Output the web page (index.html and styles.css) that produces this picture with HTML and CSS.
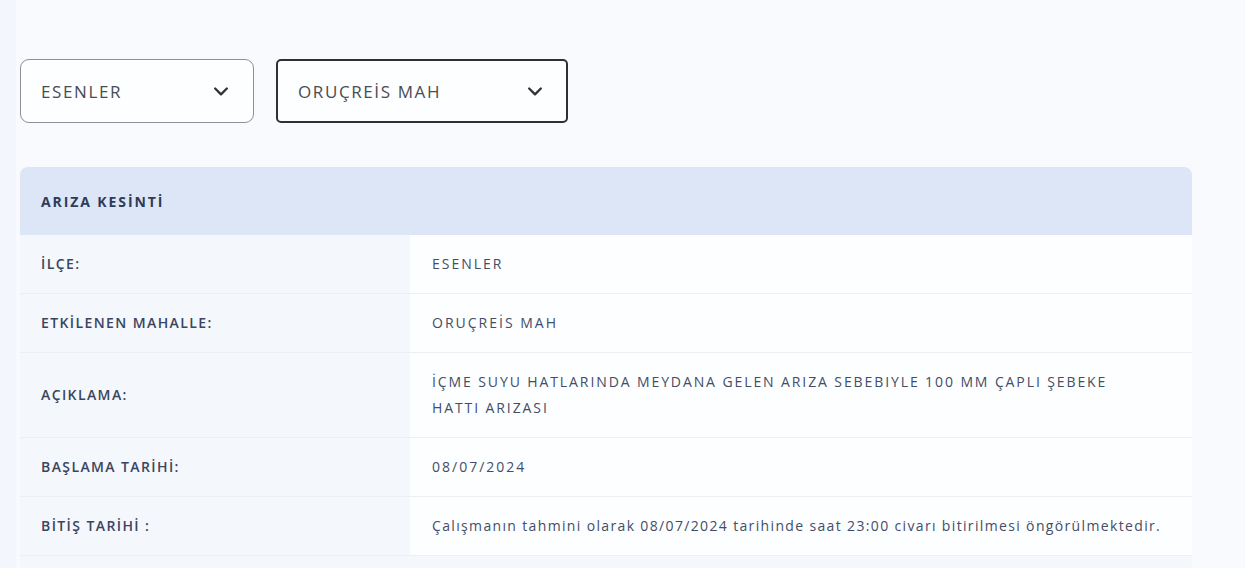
FILE: index.html
```html
<!DOCTYPE html>
<html>
<head>
    <title>Arıza Kesinti</title>
    <meta charset="utf-8">
    <link rel="stylesheet" href="styles.css">
</head>
<body>
    <div class="page">
        <div class="filters">
            <div class="select">
                <span>ESENLER</span>
                <svg class="chevron" width="20" height="20" viewBox="0 0 24 24"><path d="M5 9l7 7 7-7" fill="none" stroke="#333" stroke-width="2.8" stroke-linecap="round" stroke-linejoin="round"/></svg>
            </div>
            <div class="select select-active">
                <span>ORUÇREİS MAH</span>
                <svg class="chevron" width="20" height="20" viewBox="0 0 24 24"><path d="M5 9l7 7 7-7" fill="none" stroke="#333" stroke-width="2.8" stroke-linecap="round" stroke-linejoin="round"/></svg>
            </div>
        </div>

        <div class="outage">
            <div class="outage-head">ARIZA KESİNTİ</div>
            <div class="row">
                <div class="label">İLÇE:</div>
                <div class="value">ESENLER</div>
            </div>
            <div class="row">
                <div class="label">ETKİLENEN MAHALLE:</div>
                <div class="value">ORUÇREİS MAH</div>
            </div>
            <div class="row">
                <div class="label">AÇIKLAMA:</div>
                <div class="value value-long">İÇME SUYU HATLARINDA MEYDANA GELEN ARIZA SEBEBIYLE 100 MM ÇAPLI ŞEBEKE<br>HATTI ARIZASI</div>
            </div>
            <div class="row">
                <div class="label">BAŞLAMA TARİHİ:</div>
                <div class="value">08/07/2024</div>
            </div>
            <div class="row">
                <div class="label">BİTİŞ TARİHİ :</div>
                <div class="value value-text">Çalışmanın tahmini olarak 08/07/2024 tarihinde saat 23:00 civarı bitirilmesi öngörülmektedir.</div>
            </div>
            <div class="row row-empty">
                <div class="label"></div>
                <div class="value"></div>
            </div>
        </div>
    </div>
</body>
</html>
```

FILE: styles.css
```css
body {
    margin: 0;
    font-family: "Open Sans", "Noto Sans", sans-serif;
    background: #f8fafd;
    color: #3b4660;
}
.page {
    border-left: 16px solid #f3f6fc;
    padding: 59px 0 0 4px;
    height: 509px;
    overflow: hidden;
}
.filters {
    display: flex;
    gap: 22px;
}
.select {
    width: 234px;
    height: 64px;
    box-sizing: border-box;
    border: 1px solid #8d8f94;
    border-radius: 9px;
    background: #fdfeff;
    display: flex;
    align-items: center;
    justify-content: space-between;
    padding: 0 22px 0 20px;
    font-size: 17px;
    color: #4a4c52;
    letter-spacing: 1.6px;
}
.select-active {
    width: 292px;
    border: 2px solid #2e3033;
    border-radius: 5px;
    padding: 0 21px 0 20px;
}
.chevron {
    display: block;
}
.outage {
    margin-top: 44px;
    width: 1172px;
}
.outage-head {
    background: #dce6f6;
    border-radius: 8px 8px 0 0;
    height: 68px;
    box-sizing: border-box;
    padding: 0 21px;
    display: flex;
    align-items: center;
    font-size: 14px;
    font-weight: 700;
    letter-spacing: 1.9px;
    color: #2e3b59;
}
.row {
    display: flex;
    border-bottom: 1px solid #eceff4;
}
.label {
    width: 390px;
    flex-shrink: 0;
    box-sizing: border-box;
    padding: 16px 21px;
    background: #f4f7fc;
    font-size: 14px;
    font-weight: 600;
    line-height: 26px;
    letter-spacing: 1.4px;
    color: #3a4560;
    display: flex;
    align-items: center;
}
.value {
    flex: 1;
    padding: 16px 22px;
    background: #fdfeff;
    font-size: 14px;
    line-height: 26px;
    letter-spacing: 2px;
    color: #434d66;
}
.value-long {
    letter-spacing: 1.9px;
}
.value-text {
    letter-spacing: 1.35px;
    white-space: nowrap;
}
.row-empty .label,
.row-empty .value {
    background: #f4f7fc;
    min-height: 26px;
}
```
